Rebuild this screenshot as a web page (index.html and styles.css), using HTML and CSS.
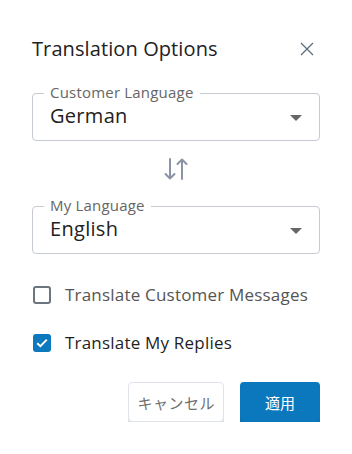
FILE: index.html
```html
<!DOCTYPE html>
<html lang="en">
<head>
<meta charset="utf-8">
<title>Translation Options</title>
<link rel="stylesheet" href="styles.css">
</head>
<body>
<div class="dialog">
  <div class="header">
    <h1 class="title">Translation Options</h1>
    <button class="close" aria-label="Close">
      <svg width="14" height="14" viewBox="0 0 14 14"><path d="M1 1L13 13M13 1L1 13" stroke="#5b6e80" stroke-width="1.3" fill="none"/></svg>
    </button>
  </div>

  <div class="field field-first">
    <span class="field-label">Customer Language</span>
    <span class="field-value">German</span>
    <span class="caret"></span>
  </div>

  <div class="swap">
    <svg width="24" height="22" viewBox="0 0 24 22">
      <path d="M6 1V20.5M1.5 16L6 20.5L10.5 16" stroke="#8a94a4" stroke-width="2" fill="none" stroke-linecap="round" stroke-linejoin="round"/>
      <path d="M18 21V1.5M13.5 6L18 1.5L22.5 6" stroke="#8a94a4" stroke-width="2" fill="none" stroke-linecap="round" stroke-linejoin="round"/>
    </svg>
  </div>

  <div class="field field-second">
    <span class="field-label">My Language</span>
    <span class="field-value">English</span>
    <span class="caret"></span>
  </div>

  <label class="check-row check-first">
    <span class="box"></span>
    <span class="check-text">Translate Customer Messages</span>
  </label>
  <label class="check-row check-second">
    <span class="box box-checked">
      <svg width="12" height="10" viewBox="0 0 12 10"><path d="M1.2 5.2L4.4 8.2L10.8 1.6" stroke="#fff" stroke-width="2" fill="none"/></svg>
    </span>
    <span class="check-text check-text-on">Translate My Replies</span>
  </label>

  <div class="actions">
    <button class="btn btn-cancel">キャンセル</button>
    <button class="btn btn-apply">適用</button>
  </div>
</div>
</body>
</html>
```

FILE: styles.css
```css
* { box-sizing: border-box; }
body {
  margin: 0;
  background: #fff;
  font-family: "Open Sans", "Noto Sans", "Noto Sans CJK JP", sans-serif;
  color: #222;
}
.dialog {
  width: 352px;
  padding: 35px 32px 0 32px;
  display: flex;
  flex-direction: column;
}
.header {
  display: flex;
  align-items: center;
  justify-content: space-between;
  height: 28px;
}
.title {
  margin: 0;
  font-size: 20px;
  line-height: 28px;
  font-weight: 500;
  color: #222;
  letter-spacing: 0.1px;
}
.close {
  width: 24px;
  height: 24px;
  padding: 0;
  margin-right: 1px;
  border: 0;
  background: none;
  display: flex;
  align-items: center;
  justify-content: center;
}
.field {
  position: relative;
  height: 48px;
  border: 1px solid #c6cbd1;
  border-radius: 4px;
  display: flex;
  align-items: center;
  padding: 0 17px 0 17px;
}
.field-first { margin-top: 30px; }
.field-second { margin-top: 26px; }
.field-label {
  position: absolute;
  top: -11px;
  left: 11px;
  padding: 0 6px;
  background: #fff;
  font-size: 15px;
  line-height: 18px;
  color: #666;
  letter-spacing: 0.2px;
}
.field-value {
  flex: 1;
  font-size: 20px;
  line-height: 28px;
  color: #222;
  margin-top: -3px;
  letter-spacing: 0.3px;
}
.caret {
  width: 0;
  height: 0;
  border-left: 6px solid transparent;
  border-right: 6px solid transparent;
  border-top: 6px solid #666;
  margin-top: 1px;
}
.swap {
  margin-top: 17px;
  height: 22px;
  display: flex;
  justify-content: center;
}
.check-row {
  display: flex;
  align-items: center;
  height: 24px;
  gap: 14px;
  padding-left: 1px;
}
.check-first { margin-top: 29px; }
.check-second { margin-top: 24px; }
.box {
  width: 18px;
  height: 18px;
  border: 2px solid #6b7580;
  border-radius: 3px;
  display: flex;
  align-items: center;
  justify-content: center;
  flex: none;
}
.box-checked {
  background: #0c78bd;
  border-color: #0c78bd;
}
.check-text {
  font-size: 17px;
  line-height: 24px;
  color: #555;
  letter-spacing: 0.2px;
}
.check-text-on {
  color: #1f1f1f;
  font-weight: 500;
}
.actions {
  margin-top: 27px;
  display: flex;
  justify-content: flex-end;
  gap: 16px;
}
.btn {
  height: 40px;
  border-radius: 4px;
  font-family: "Noto Sans CJK JP", sans-serif;
  font-size: 15px;
  cursor: pointer;
}
.btn-cancel {
  background: #fff;
  border: 1px solid #dfe4ea;
  box-shadow: 0 2px 0 #d7dee6;
  color: #707070;
  padding: 0 8px;
  letter-spacing: 0.5px;
}
.btn-apply {
  min-width: 80px;
  background: #0b78bd;
  border: 0;
  box-shadow: 0 2px 0 #085c92;
  color: #fff;
  padding: 0 16px;
}
```
